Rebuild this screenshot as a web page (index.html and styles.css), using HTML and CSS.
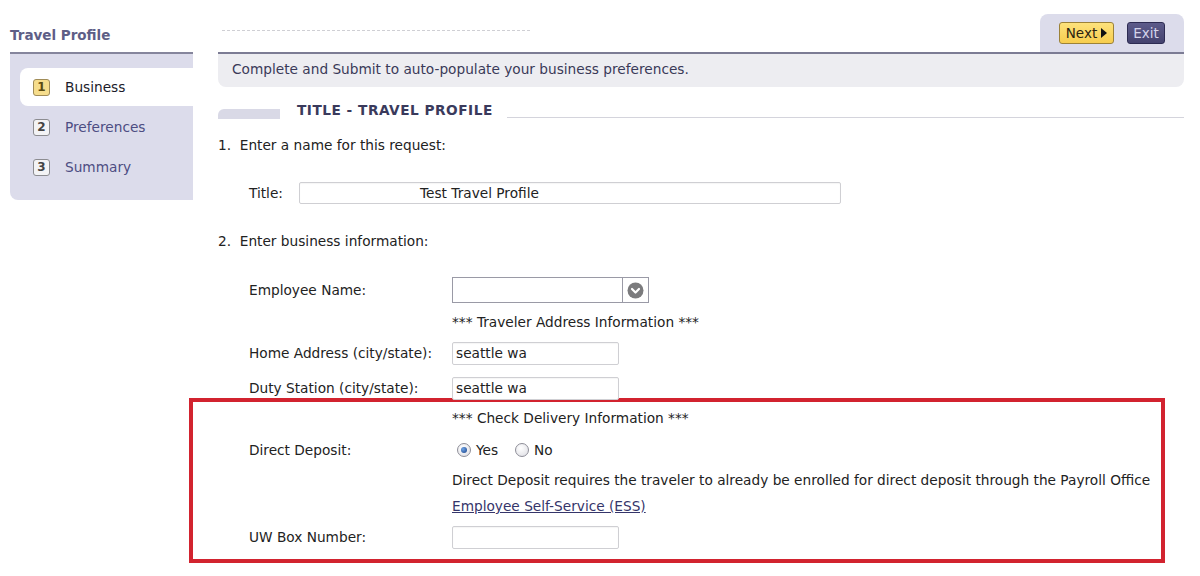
FILE: index.html
```html
<!DOCTYPE html>
<html>
<head>
<meta charset="utf-8">
<link rel="stylesheet" href="styles.css">
</head>
<body>
<div class="page">
  <aside class="sidebar">
    <div class="side-title">Travel Profile</div>
    <div class="side-panel">
      <div class="step active"><span class="num">1</span><span class="step-text">Business</span></div>
      <div class="step"><span class="num">2</span><span class="step-text">Preferences</span></div>
      <div class="step"><span class="num">3</span><span class="step-text">Summary</span></div>
    </div>
  </aside>
  <main class="main">
    <div class="topbar">
      <div class="crumbs"><div class="dashed"></div></div>
      <div class="tab">
        <button class="btn next">Next <span class="tri"></span></button>
        <button class="btn exit">Exit</button>
      </div>
    </div>
    <div class="info">Complete and Submit to auto-populate your business preferences.</div>
    <div class="sec-head">
      <span class="sec-block"></span>
      <span class="sec-title">TITLE - TRAVEL PROFILE</span>
      <span class="sec-line"></span>
    </div>
    <div class="q q1">1.&nbsp; Enter a name for this request:</div>
    <div class="row r-title">
      <span class="lbl-short">Title:</span>
      <div class="input wide"><span class="title-val">Test Travel Profile</span></div>
    </div>
    <div class="q q2">2.&nbsp; Enter business information:</div>
    <div class="row r-emp">
      <span class="lbl">Employee Name:</span>
      <div class="select">
        <span class="sel-val"></span>
        <span class="sel-btn">
          <svg width="17" height="17" viewBox="0 0 17 17"><circle cx="8.5" cy="8.5" r="8" fill="#7b7b7d"/><path d="M5 7 L8.5 10.5 L12 7" stroke="#fff" stroke-width="2.2" fill="none" stroke-linecap="round" stroke-linejoin="round"/></svg>
        </span>
      </div>
    </div>
    <div class="row r-note1"><span class="lbl"></span><span>*** Traveler Address Information ***</span></div>
    <div class="row r-home"><span class="lbl">Home Address (city/state):</span><div class="input small">seattle wa</div></div>
    <div class="row r-duty"><span class="lbl">Duty Station (city/state):</span><div class="input small">seattle wa</div></div>
    <div class="highlight">
      <div class="row h-note"><span class="lbl"></span><span>*** Check Delivery Information ***</span></div>
      <div class="row h-dd">
        <span class="lbl">Direct Deposit:</span>
        <span class="radio checked"></span><span class="r-label">Yes</span>
        <span class="radio"></span><span class="r-label">No</span>
      </div>
      <div class="row h-text"><span class="lbl"></span><span>Direct Deposit requires the traveler to already be enrolled for direct deposit through the Payroll Office</span></div>
      <div class="row h-link"><span class="lbl"></span><a class="link" href="#">Employee Self-Service (ESS)</a></div>
      <div class="row h-uw"><span class="lbl">UW Box Number:</span><div class="input small"></div></div>
    </div>
  </main>
</div>
</body>
</html>
```
FILE: styles.css
```css
* { box-sizing: border-box; }
html, body { margin: 0; padding: 0; background: #fff; }
body {
  font-family: "DejaVu Sans", Verdana, sans-serif;
  font-size: 13.7px;
  color: #222;
  width: 1200px;
  height: 576px;
  overflow: hidden;
}
.page { display: flex; padding-left: 10px; }

/* sidebar */
.sidebar { width: 183px; flex: none; padding-top: 26px; }
.side-title {
  font-weight: bold;
  color: #5e5e86;
  font-size: 13.5px;
  height: 28px;
  line-height: 18px;
  border-bottom: 2px solid #85859c;
}
.side-panel {
  background: #dcdceb;
  height: 146px;
  border-bottom-left-radius: 8px;
  padding: 14px 0 0 10px;
}
.step {
  height: 40px;
  display: flex;
  align-items: center;
  padding-left: 13px;
  color: #4d4d82;
}
.step.active {
  background: #fff;
  color: #1c1c2a;
  border-radius: 8px 0 0 8px;
  height: 38px;
  margin-bottom: 1px;
}
.num {
  width: 17px;
  height: 17px;
  border: 1px solid #8c8c90;
  border-radius: 3px;
  background: #f3f3f5;
  color: #444;
  font-weight: bold;
  font-size: 12px;
  display: flex;
  align-items: center;
  justify-content: center;
  margin-right: 15px;
}
.step.active .num { background: #f6dd8c; border-color: #a08c58; color: #5a4a10; }

/* main */
.main { margin-left: 25px; width: 966px; flex: none; }
.topbar { height: 52px; display: flex; justify-content: space-between; align-items: flex-end; }
.crumbs { align-self: flex-start; padding: 30px 0 0 4px; }
.dashed { width: 308px; border-top: 1px dashed #cfcfd4; }
.tab {
  width: 144px;
  height: 38px;
  background: #dcdceb;
  border-radius: 8px 8px 0 0;
  display: flex;
  align-items: flex-start;
  padding: 8px 0 0 19px;
  gap: 13px;
}
.btn {
  font-family: "DejaVu Sans", Verdana, sans-serif;
  font-size: 13.5px;
  height: 22px;
  border-radius: 3px;
  padding: 0;
  display: flex;
  align-items: center;
  justify-content: center;
}
.next {
  width: 55px;
  background: linear-gradient(#fde27c, #f7cd4e);
  border: 1px solid #9c8238;
  color: #2a2410;
  gap: 4px;
}
.tri {
  width: 0; height: 0;
  border-left: 6px solid #111;
  border-top: 5px solid transparent;
  border-bottom: 5px solid transparent;
}
.exit {
  width: 38px;
  background: linear-gradient(#5d5b8a, #44426e);
  border: 1px solid #2d2b52;
  color: #d4d4ea;
}
.info {
  border-top: 2px solid #7c7c94;
  background: #ededf1;
  height: 35px;
  border-radius: 0 0 8px 8px;
  padding: 0 0 3px 14px;
  display: flex;
  align-items: center;
  color: #3a3a58;
}
.sec-head { height: 22px; margin-top: 12px; display: flex; align-items: center; }
.sec-block {
  width: 62px; height: 10px;
  background: #d9d9e6;
  border-radius: 6px 0 0 0;
  align-self: flex-end;
  margin-bottom: 2px;
}
.sec-title {
  font-weight: bold;
  color: #3a3a5c;
  margin-left: 17px;
  letter-spacing: 0.5px;
}
.sec-line {
  flex: 1;
  border-top: 1px solid #d4d4dc;
  align-self: flex-end;
  margin: 0 0 3px 14px;
}

.q { height: 24px; display: flex; align-items: center; }
.q1 { margin-top: 12px; }
.q2 { margin-top: 25px; }
.row { display: flex; align-items: center; padding-left: 31px; height: 24px; }
.lbl { width: 203px; flex: none; }
.lbl-short { width: 50px; flex: none; }
.r-title { margin-top: 25px; height: 22px; }
.r-emp { margin-top: 24px; height: 26px; }
.r-note1 { margin-top: 7px; }
.r-home { margin-top: 7px; }
.r-duty { margin-top: 11px; }

.input {
  height: 23px;
  border: 1px solid #cfcfd3;
  border-radius: 2px;
  background: #fff;
  display: flex;
  align-items: center;
  padding-left: 3px;
  box-shadow: inset 0 1px 1px rgba(0,0,0,0.04);
}
.input.wide { width: 542px; height: 22px; }
.title-val { padding-left: 117px; }
.input.small { width: 167px; }
.select {
  width: 197px; height: 26px;
  border: 1px solid #9a9aa6;
  display: flex;
  background: #fff;
}
.sel-val { flex: 1; }
.sel-btn {
  width: 26px;
  border-left: 1px solid #9a9aa6;
  display: flex;
  align-items: center;
  justify-content: center;
}

.highlight {
  margin-left: -29px;
  width: 976px;
  border: 4px solid #d2232f;
  margin-top: -2px;
  padding: 4px 0 10px 25px;
}
.h-dd { margin-top: 8px; height: 23px; }
.h-text { margin-top: 7px; }
.h-link { margin-top: 2px; }
.h-uw { margin-top: 7px; }
.radio {
  width: 14px; height: 14px;
  border-radius: 50%;
  border: 1px solid #8e8e98;
  background: radial-gradient(circle at 40% 35%, #fff, #dcdce2);
  margin-left: 5px;
  position: relative;
  flex: none;
}
.radio.checked::after {
  content: "";
  position: absolute;
  left: 3px; top: 3px;
  width: 6px; height: 6px;
  border-radius: 50%;
  background: radial-gradient(circle at 35% 35%, #6fa4e6, #173f86);
}
.r-label { margin-left: 5px; margin-right: 12px; }
.link { color: #35356a; text-decoration: underline; }
```
